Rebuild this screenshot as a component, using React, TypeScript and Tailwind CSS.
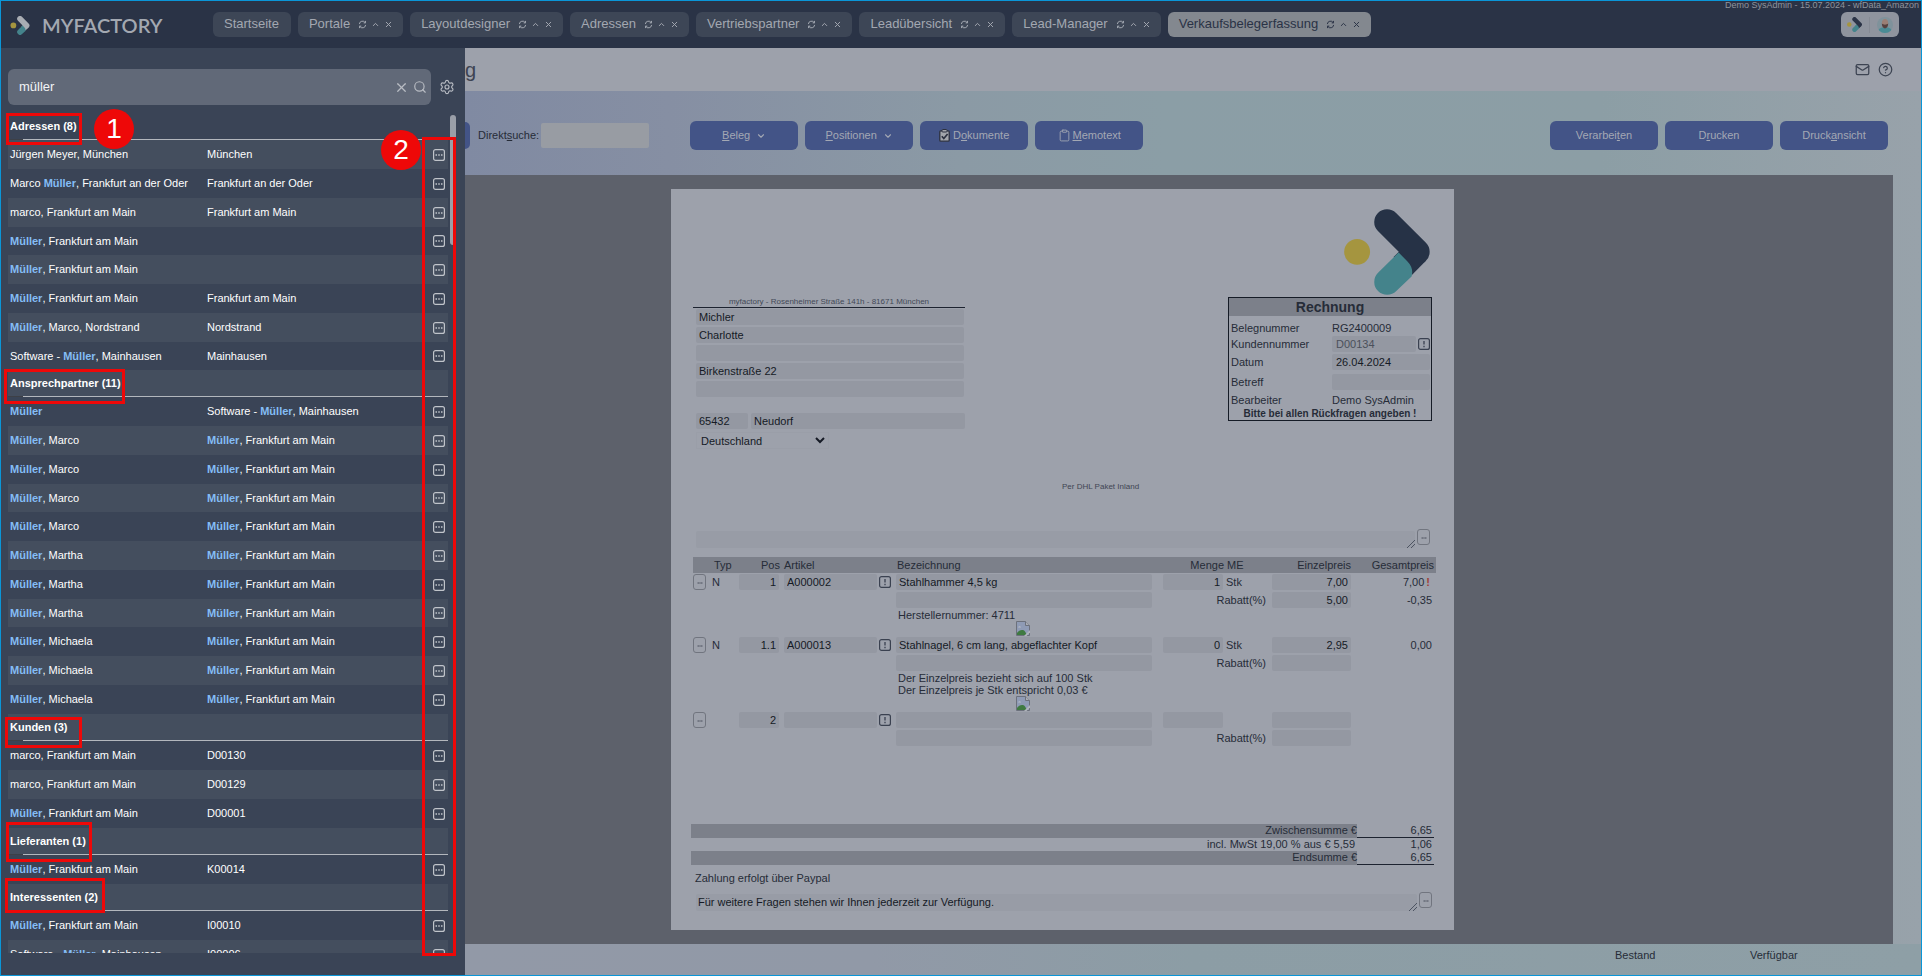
import type { ReactNode } from 'react'
import { ChevronDown, ChevronUp, CircleHelp, Clipboard, Mail, Search, Settings, X } from 'lucide-react'
import clsx from 'clsx'

const tabs = [
  'Portale',
  'Layoutdesigner',
  'Adressen',
  'Vertriebspartner',
  'Leadübersicht',
  'Lead-Manager',
  'Verkaufsbelegerfassung',
]

interface Group {
  title: string
  rows: [string, string][]
}

const groups: Group[] = [
  {
    title: 'Adressen (8)',
    rows: [
      ['Jürgen Meyer, München', 'München'],
      ['Marco Müller, Frankfurt an der Oder', 'Frankfurt an der Oder'],
      ['marco, Frankfurt am Main', 'Frankfurt am Main'],
      ['Müller, Frankfurt am Main', ''],
      ['Müller, Frankfurt am Main', ''],
      ['Müller, Frankfurt am Main', 'Frankfurt am Main'],
      ['Müller, Marco, Nordstrand', 'Nordstrand'],
      ['Software - Müller, Mainhausen', 'Mainhausen'],
    ],
  },
  {
    title: 'Ansprechpartner (11)',
    rows: [
      ['Müller', 'Software - Müller, Mainhausen'],
      ['Müller, Marco', 'Müller, Frankfurt am Main'],
      ['Müller, Marco', 'Müller, Frankfurt am Main'],
      ['Müller, Marco', 'Müller, Frankfurt am Main'],
      ['Müller, Marco', 'Müller, Frankfurt am Main'],
      ['Müller, Martha', 'Müller, Frankfurt am Main'],
      ['Müller, Martha', 'Müller, Frankfurt am Main'],
      ['Müller, Martha', 'Müller, Frankfurt am Main'],
      ['Müller, Michaela', 'Müller, Frankfurt am Main'],
      ['Müller, Michaela', 'Müller, Frankfurt am Main'],
      ['Müller, Michaela', 'Müller, Frankfurt am Main'],
    ],
  },
  {
    title: 'Kunden (3)',
    rows: [
      ['marco, Frankfurt am Main', 'D00130'],
      ['marco, Frankfurt am Main', 'D00129'],
      ['Müller, Frankfurt am Main', 'D00001'],
    ],
  },
  {
    title: 'Lieferanten (1)',
    rows: [['Müller, Frankfurt am Main', 'K00014']],
  },
  {
    title: 'Interessenten (2)',
    rows: [
      ['Müller, Frankfurt am Main', 'I00010'],
      ['Software - Müller, Mainhausen', 'I00006'],
    ],
  },
]

interface Position {
  typ: string
  pos: string
  artikel: string
  name: string
  menge: string
  me: string
  preis: string
  gesamt: string
  warn?: boolean
  rabatt: string
  rabattSumme: string
  notes: string[]
}

const positions: Position[] = [
  {
    typ: 'N',
    pos: '1',
    artikel: 'A000002',
    name: 'Stahlhammer 4,5 kg',
    menge: '1',
    me: 'Stk',
    preis: '7,00',
    gesamt: '7,00',
    warn: true,
    rabatt: '5,00',
    rabattSumme: '-0,35',
    notes: ['Herstellernummer: 4711'],
  },
  {
    typ: 'N',
    pos: '1.1',
    artikel: 'A000013',
    name: 'Stahlnagel, 6 cm lang, abgeflachter Kopf',
    menge: '0',
    me: 'Stk',
    preis: '2,95',
    gesamt: '0,00',
    rabatt: '',
    rabattSumme: '',
    notes: ['Der Einzelpreis bezieht sich auf 100 Stk', 'Der Einzelpreis je Stk entspricht 0,03 €'],
  },
  {
    typ: '',
    pos: '2',
    artikel: '',
    name: '',
    menge: '',
    me: '',
    preis: '',
    gesamt: '',
    rabatt: '',
    rabattSumme: '',
    notes: [],
  },
]

function Logo({ className, arm }: { className: string; arm: string }) {
  return (
    <svg viewBox="0 0 258 259" className={className} aria-hidden="true">
      <circle cx="39" cy="129" r="39" fill="#a5953f" />
      <path
        d="M129 39 L219 129"
        stroke={arm}
        strokeWidth="77"
        strokeLinecap="round"
        fill="none"
      />
      <path d="M219 129 L176 172" stroke={arm} strokeWidth="77" fill="none" />
      <path
        d="M102 192 L164 131 L190 157 C206 173 207 190 203 203 L157 247 A38.5 38.5 0 0 1 102 192 Z"
        fill="#44838b"
      />
    </svg>
  )
}

function Highlight({ text }: { text: string }) {
  return (
    <>
      {text.split(/(Müller)/).map((part, i) =>
        part === 'Müller' ? (
          <b key={i} className="text-[#84bdf5]">
            {part}
          </b>
        ) : (
          part
        ),
      )}
    </>
  )
}

function MoreIcon() {
  return (
    <svg viewBox="0 0 12 12" className="size-3" fill="none" aria-hidden="true">
      <rect x="0.6" y="0.6" width="10.8" height="10.8" rx="2" stroke="#c0c4ca" strokeWidth="1.2" />
      <path d="M2.500 6h1.500M5.250 6h1.500M8 6h1.500" stroke="#c0c4ca" strokeWidth="1.500" />
    </svg>
  )
}

function ReloadIcon() {
  return (
    <svg viewBox="0 0 10 10" className="size-[9px]" fill="none" stroke="currentColor" strokeWidth="1.1" aria-hidden="true">
      <path d="M1.500 4.500A3.500 3.500 0 0 1 8 3M8.500 5.500A3.500 3.500 0 0 1 2 7" />
      <path d="M8.300 1v2.200H6.300M1.700 9V6.800h2" />
    </svg>
  )
}

function InfoButton({ label }: { label: string }) {
  return (
    <button type="button" aria-label={label} className="block size-3">
      <svg viewBox="0 0 12 12" className="size-3" fill="none" aria-hidden="true">
        <rect x="0.6" y="0.6" width="10.8" height="10.8" rx="2" stroke="#3a4150" strokeWidth="1.2" />
        <path d="M6 3v3.4M6 7.8v1.4" stroke="#3a4150" strokeWidth="1.3" />
      </svg>
    </button>
  )
}

function DotsButton({ label }: { label: string }) {
  return (
    <button
      type="button"
      aria-label={label}
      className="flex h-4 w-[13px] shrink-0 items-center justify-center rounded-[3px] border border-[#71757f] pt-0.5"
    >
      <svg viewBox="0 0 6 2" className="h-0.5 w-1.5" aria-hidden="true">
        <path d="M0.500 1h2.200M3.300 1h2.200" stroke="#4a4f5c" strokeWidth="1" />
      </svg>
    </button>
  )
}

function BrokenImage() {
  return (
    <svg viewBox="0 0 14 15" className="h-[15px] w-3.5" role="img" aria-label="Artikelbild">
      <path d="M0.5 0.5h9l4 4v10h-13z" fill="#8f9bb5" stroke="#6c717c" />
      <path d="M9.5 0.5v4h4" fill="#a9adb5" stroke="#6c717c" />
      <path d="M2 6.5c.6-1.6 2.6-1.4 3 0z" fill="#b9bdc6" />
      <path d="M1 14v-2c2-3 6-4 8-1.500l2 3.500z" fill="#3f7a41" />
      <path d="M8 15l6-6v2.500l-3.500 3.500z" fill="#b0b4bc" />
    </svg>
  )
}

function Field({ label, value = '', className }: { label: string; value?: string; className?: string }) {
  return (
    <input
      type="text"
      aria-label={label}
      defaultValue={value}
      className={clsx('block h-4 min-w-0 rounded-xs bg-[#9498a2] px-[3px] text-[11px] text-[#151a25]', className)}
    />
  )
}

function ActionButton({ children }: { children: ReactNode }) {
  return (
    <button
      type="button"
      className="flex h-[29px] w-[108px] items-center justify-center rounded-md bg-[#435487] text-[11px] text-[#a3a8b4]"
    >
      {children}
    </button>
  )
}

function TopBar() {
  return (
    <header className="relative flex h-[47px] shrink-0 items-start bg-[#2a3346] pt-[11px] pr-[22px] pl-[9px]">
      <div className="flex w-[203px] items-center gap-3 pt-px">
        <Logo className="h-[19px] w-5" arm="#a9adb3" />
        <span className="font-[Lato] text-[20px] leading-6 font-semibold text-[#a3a8b1]">MYFACTORY</span>
      </div>
      <nav className="flex gap-[7px] text-[13px] text-[#a3a8b1]">
        <a href="#startseite" className="flex h-[25px] items-center rounded-md bg-[#3d4656] pr-3 pb-px pl-[11px]">
          Startseite
        </a>
        {tabs.map((tab, i) => (
          <div
            key={tab}
            className={clsx(
              'flex h-[25px] items-center rounded-md pr-[10px] pb-px pl-[11px]',
              i === tabs.length - 1 ? 'bg-[#83888f] text-[#2a3346]' : 'bg-[#3d4656]',
            )}
          >
            <a href={`#${tab}`}>{tab}</a>
            <span className="ml-2 flex items-center gap-1">
              <button type="button" aria-label={`${tab} neu laden`}>
                <ReloadIcon />
              </button>
              <button type="button" aria-label={`${tab} lösen`}>
                <ChevronUp className="size-[9px]" strokeWidth={2.6} />
              </button>
              <button type="button" aria-label={`${tab} schließen`}>
                <X className="size-[9px]" strokeWidth={2.6} />
              </button>
            </span>
          </div>
        ))}
      </nav>
      <div className="ml-auto flex h-[25px] w-[58px] items-center justify-between rounded-md bg-[#8f949e] px-[6px]">
        <Logo className="size-[15px]" arm="#2a3346" />
        <span className="h-4 w-px bg-[#858a94]" />
        <svg viewBox="0 0 16 16" className="size-4" aria-label="Benutzer" role="img">
          <defs>
            <clipPath id="avatar">
              <circle cx="8" cy="8" r="8" />
            </clipPath>
          </defs>
          <g clipPath="url(#avatar)">
            <rect width="16" height="16" fill="#7f929b" />
            <ellipse cx="8" cy="16" rx="8" ry="6" fill="#4a8b95" />
            <ellipse cx="8" cy="6.500" rx="3.200" ry="4.500" fill="#9b7f75" />
            <path d="M4.800 6.500c.4 6.500 6 6.500 6.400 0-1.500 1.500-4.900 1.500-6.400 0z" fill="#55413f" />
          </g>
        </svg>
      </div>
      <p className="absolute top-[-2px] right-0.5 text-[9px] leading-3 text-[#8f949d]">
        Demo SysAdmin - 15.07.2024 - wfData_Amazon
      </p>
    </header>
  )
}

function SearchPanel() {
  let line = 0
  return (
    <aside className="flex w-[464px] shrink-0 flex-col bg-[#3a4456] pt-[21px] pb-[22px] pl-[7px]">
      <div className="flex items-center">
        <div className="flex h-9 w-[423px] items-center rounded-md bg-[#616978] pr-1 text-[#b8bcc3]">
          <input
            type="text"
            aria-label="Suche"
            defaultValue="müller"
            className="min-w-0 flex-1 pl-[11px] text-[13px] text-[#f2f3f5]"
          />
          <button type="button" aria-label="Suche leeren" className="mr-1">
            <X className="size-[15px]" />
          </button>
          <button type="button" aria-label="Suchen">
            <Search className="size-[14px]" />
          </button>
        </div>
        <button type="button" aria-label="Einstellungen" className="ml-2 text-[#b8bcc3]">
          <Settings className="size-4" strokeWidth={1.7} />
        </button>
      </div>
      <div className="mt-2 flex min-h-0 flex-1 overflow-hidden">
        <table className="h-max w-[440px] table-fixed border-collapse text-[11px] text-white">
          <colgroup>
            <col className="w-[197px]" />
            <col />
            <col className="w-[24px]" />
          </colgroup>
          {groups.map((group) => (
            <tbody key={group.title}>
              <tr className={clsx(line++ % 2 ? 'bg-[#444e5e]' : 'bg-[#3a4456]')}>
                <th colSpan={3} className="p-0 text-left">
                  <div className="h-[26px] pl-0.5 leading-[26px]">{group.title}</div>
                  <div className="h-px border-l-[15px] border-[#3d4047] bg-[#b3b7bd]" />
                </th>
              </tr>
              {group.rows.map(([name, detail], i) => (
                <tr
                  key={i}
                  className={clsx(line++ % 2 ? 'bg-[#444e5e]' : 'bg-[#3a4456]', i % 4 === 3 ? 'h-[28px]' : 'h-[29px]')}
                >
                  <td className="py-0 pl-0.5">
                    <Highlight text={name} />
                  </td>
                  <td className="py-0 pl-0.5">
                    <Highlight text={detail} />
                  </td>
                  <td className="py-0 pl-[9px]">
                    <button type="button" aria-label={`Aktionen ${name}`} className="block">
                      <MoreIcon />
                    </button>
                  </td>
                </tr>
              ))}
            </tbody>
          ))}
        </table>
        <div className="mt-0.5 ml-0.5 h-[130px] w-1.5 rounded-full bg-[#9a9fa8]" />
      </div>
    </aside>
  )
}

function AddressBlock() {
  return (
    <div className="w-[272px] pt-[87px]">
      <p className="border-b border-[#1d2330] text-center text-[8px] leading-[11px] text-[#434957]">
        myfactory - Rosenheimer Straße 141h - 81671 München
      </p>
      <div className="mt-px mr-px ml-[3px] flex flex-col gap-0.5">
        <Field label="Name" value="Michler" />
        <Field label="Vorname" value="Charlotte" />
        <Field label="Zusatz" />
        <Field label="Straße" value="Birkenstraße 22" />
        <Field label="Zusatz 2" />
      </div>
      <div className="mt-4 ml-[3px] flex gap-[3px]">
        <Field label="PLZ" value="65432" className="w-[52px]" />
        <Field label="Ort" value="Neudorf" className="flex-1" />
      </div>
      <div className="mt-[3px] ml-[3px] flex h-[17px] w-[133px] items-center border border-[#9a9ea8]">
        <select aria-label="Land" defaultValue="Deutschland" className="h-full w-full text-[11px] text-[#151a25]">
          <option>Deutschland</option>
        </select>
      </div>
    </div>
  )
}

function InvoiceBox() {
  return (
    <div className="mr-1 flex w-[204px] flex-col">
      <Logo className="mr-0.5 size-[86px] self-end" arm="#263246" />
      <section className="mt-0.5 border border-[#151b26] text-[11px] text-[#262c38]">
        <h2 className="mb-1 bg-[#7c808a] text-center text-sm leading-[18px] font-bold">Rechnung</h2>
        <div className="grid grid-cols-[101px_1fr] items-center pl-0.5 leading-4">
          <span>Belegnummer</span>
          <span>RG2400009</span>
          <label htmlFor="kundennummer">Kundennummer</label>
          <span className="flex items-center justify-between pr-px">
            <input
              id="kundennummer"
              type="text"
              defaultValue="D00134"
              className="h-4 w-[84px] rounded-xs bg-[#9498a2] px-1 text-[#4b505b]"
            />
            <InfoButton label="Kunde anzeigen" />
          </span>
          <label htmlFor="datum" className="leading-5">
            Datum
          </label>
          <input
            id="datum"
            type="text"
            defaultValue="26.04.2024"
            className="mr-px h-4 min-w-0 rounded-xs bg-[#9498a2] px-1 text-[#151a25]"
          />
          <label htmlFor="betreff" className="leading-5">
            Betreff
          </label>
          <input id="betreff" type="text" className="mr-px h-4 min-w-0 rounded-xs bg-[#9498a2] px-1" />
          <span>Bearbeiter</span>
          <span>Demo SysAdmin</span>
        </div>
        <p className="text-center text-[10px] leading-3 font-bold">Bitte bei allen Rückfragen angeben !</p>
      </section>
    </div>
  )
}

function PositionRows({ item }: { item: Position }) {
  return (
    <tbody>
      <tr className="h-[18px]">
        <td className="p-0">
          <DotsButton label={`Position ${item.pos} bearbeiten`} />
        </td>
        <td className="py-0 pl-0.5">{item.typ}</td>
        <td className="p-0">
          <Field label="Pos" value={item.pos} className="w-10 text-right" />
        </td>
        <td className="py-0 pl-0.5">
          <Field label="Artikel" value={item.artikel} className="w-[93px]" />
        </td>
        <td className="py-0 pl-px">
          <InfoButton label="Artikel anzeigen" />
        </td>
        <td className="py-0 pr-2">
          <Field label="Bezeichnung" value={item.name} className="w-full" />
        </td>
        <td className="py-0 pr-0.5 pl-[3px]">
          <Field label="Menge" value={item.menge} className="w-full text-right" />
        </td>
        <td className="py-0 pl-px">{item.me}</td>
        <td className="py-0 pr-0.5 pl-1">
          <Field label="Einzelpreis" value={item.preis} className="w-full text-right" />
        </td>
        <td className="py-0 pr-1 text-right">
          {item.gesamt}
          {item.warn && <b className="ml-0.5 pr-0.5 text-[#a04038]">!</b>}
        </td>
      </tr>
      <tr className="h-[18px]">
        <td colSpan={5} className="p-0" />
        <td className="py-0 pr-2">
          <Field label="Bezeichnung 2" className="w-full" />
        </td>
        <td colSpan={2} className="py-0 pr-0.5 text-right">
          Rabatt(%)
        </td>
        <td className="py-0 pr-0.5 pl-1">
          <Field label="Rabatt" value={item.rabatt} className="w-full text-right" />
        </td>
        <td className="py-0 pr-1 text-right">{item.rabattSumme}</td>
      </tr>
      {item.notes.length > 0 && (
        <tr>
          <td colSpan={5} className="p-0" />
          <td className="py-0 pr-3 pl-0.5 leading-3">
            {item.notes.map((note) => (
              <div key={note}>{note}</div>
            ))}
            <div className="flex justify-center">
              <BrokenImage />
            </div>
          </td>
          <td colSpan={4} className="p-0" />
        </tr>
      )}
    </tbody>
  )
}

function NoteArea({ label, value = '' }: { label: string; value?: string }) {
  return (
    <div className="ml-[3px] flex items-start gap-0.5">
      <div className="relative mt-0.5 min-w-0 flex-1">
        <textarea
          aria-label={label}
          defaultValue={value}
          rows={1}
          className="block h-[17px] w-full resize-none overflow-hidden rounded-xs bg-[#989ca6] px-0.5 text-[11px] leading-4 text-[#151a25]"
        />
        <svg viewBox="0 0 8 8" className="absolute right-0 bottom-0 size-2" aria-hidden="true">
          <path d="M0 8L8 0M4 8L8 4" stroke="#3a4150" strokeWidth="0.8" />
        </svg>
      </div>
      <DotsButton label={`${label} bearbeiten`} />
    </div>
  )
}

function InvoicePage() {
  return (
    <article className="w-[783px] shrink-0 bg-[#9da1ab] pt-5 pr-[18px] pb-5 pl-[22px] text-[11px] text-[#262c38]">
      <div className="flex items-start justify-between">
        <AddressBlock />
        <InvoiceBox />
      </div>
      <p className="mt-8 ml-[369px] text-[8px] leading-3 text-[#3f4553]">Per DHL Paket Inland</p>
      <div className="mt-9 mr-[6px]">
        <NoteArea label="Kopftext" />
      </div>
      <table className="mt-[9px] w-full table-fixed border-collapse leading-4">
        <colgroup>
          <col className="w-[17px]" />
          <col className="w-[29px]" />
          <col className="w-[43px]" />
          <col className="w-[96px]" />
          <col className="w-[18px]" />
          <col />
          <col className="w-[65px]" />
          <col className="w-[43px]" />
          <col className="w-[85px]" />
          <col className="w-[83px]" />
        </colgroup>
        <thead className="bg-[#7c808a] text-left">
          <tr>
            <th className="p-0" />
            <th className="py-0 pl-1 font-normal">Typ</th>
            <th className="py-0 pr-0.5 text-right font-normal">Pos</th>
            <th className="py-0 pl-0.5 font-normal">Artikel</th>
            <th className="p-0" />
            <th className="py-0 pl-px font-normal">Bezeichnung</th>
            <th className="py-0 pr-px text-right font-normal">Menge</th>
            <th className="py-0 pl-0.5 font-normal">ME</th>
            <th className="py-0 pr-0.5 text-right font-normal">Einzelpreis</th>
            <th className="py-0 pr-0.5 text-right font-normal">Gesamtpreis</th>
          </tr>
        </thead>
        {positions.map((item) => (
          <PositionRows key={item.pos} item={item} />
        ))}
      </table>
      <table className="mt-[77px] -ml-0.5 w-[743px] table-fixed border-collapse text-right leading-[13px]">
        <colgroup>
          <col />
          <col className="w-[77px]" />
        </colgroup>
        <tbody>
          <tr>
            <td className="bg-[#7c808a] p-0">Zwischensumme €</td>
            <td className="border-b border-[#1d2330] py-0 pr-0.5">6,65</td>
          </tr>
          <tr>
            <td className="py-0 pr-0.5">incl. MwSt 19,00 % aus € 5,59</td>
            <td className="py-0 pr-0.5">1,06</td>
          </tr>
          <tr>
            <td className="bg-[#7c808a] p-0">Endsumme €</td>
            <td className="border-b border-[#1d2330] py-0 pr-0.5">6,65</td>
          </tr>
        </tbody>
      </table>
      <p className="mt-[7px] pl-0.5 leading-[13px]">Zahlung erfolgt über Paypal</p>
      <div className="mt-[7px] mr-1">
        <NoteArea label="Fußtext" value="Für weitere Fragen stehen wir Ihnen jederzeit zur Verfügung." />
      </div>
    </article>
  )
}

function Workspace() {
  return (
    <main className="flex min-w-0 flex-1 flex-col bg-[linear-gradient(90deg,#808aa2_0%,#868fa3_14%,#8b9aa5_34%,#8b9ea6_48%,#8c9ea5_78%,#98a2aa_100%)]">
      <div className="flex h-[43px] shrink-0 items-center justify-between bg-[#9da1ab] pr-7 text-[#3d4452]">
        <h1 className="text-xl leading-6">g</h1>
        <div className="flex items-center gap-2">
          <button type="button" aria-label="Nachricht">
            <Mail className="size-[15px]" />
          </button>
          <button type="button" aria-label="Hilfe">
            <CircleHelp className="size-[15px]" />
          </button>
        </div>
      </div>
      <div className="flex h-[84px] shrink-0 items-center pt-[5px] pr-[33px]">
        <div className="h-[27px] w-[5px] rounded-r-md bg-[#435487]" />
        <label htmlFor="direktsuche" className="ml-2 text-[11px] text-[#262c38]">
          Direkt<u>s</u>uche:
        </label>
        <input id="direktsuche" type="text" className="ml-0.5 h-[25px] w-[108px] rounded-xs bg-[#989ca3] px-1 text-[11px]" />
        <div className="ml-[41px] flex gap-[7px]">
          <ActionButton>
            <span>
              <u>B</u>eleg
            </span>
            <ChevronDown className="ml-1.5 size-[10px]" strokeWidth={2.6} />
          </ActionButton>
          <ActionButton>
            <span>
              <u>P</u>ositionen
            </span>
            <ChevronDown className="ml-1.5 size-[10px]" strokeWidth={2.6} />
          </ActionButton>
          <ActionButton>
            <svg viewBox="0 0 11 13" className="mr-[3px] h-[13px] w-[11px]" fill="none" aria-hidden="true">
              <rect x="0.800" y="1.800" width="9.400" height="10.400" rx="1" fill="#a3a6ac" stroke="#2c3140" strokeWidth="1.300" />
              <rect x="3" y="0.500" width="5" height="2.500" rx="0.800" fill="#a3a6ac" stroke="#2c3140" />
              <path d="M2.800 7.200l2 2.300 3.800-4.500" stroke="#2c3140" strokeWidth="1.700" />
            </svg>
            <span>
              D<u>o</u>kumente
            </span>
          </ActionButton>
          <ActionButton>
            <Clipboard className="mr-0.5 size-[13px]" strokeWidth={1.6} />
            <span>
              <u>M</u>emotext
            </span>
          </ActionButton>
        </div>
        <div className="ml-auto flex gap-[7px]">
          <ActionButton>
            <span>
              Verarbei<u>t</u>en
            </span>
          </ActionButton>
          <ActionButton>
            <span>
              D<u>r</u>ucken
            </span>
          </ActionButton>
          <ActionButton>
            <span>
              Druck<u>a</u>nsicht
            </span>
          </ActionButton>
        </div>
      </div>
      <div className="mr-7 flex min-h-0 flex-1 items-stretch bg-[#5d616b] py-[14px] pl-[206px]">
        <InvoicePage />
      </div>
      <footer className="flex h-[31px] shrink-0 justify-end bg-[linear-gradient(90deg,#9299a7_0%,#9199a7_28%,#8c9da5_50%,#8e9fa6_100%)] pt-1 pr-[123px] text-[11px] leading-[14px] text-[#262c38]">
        <span className="w-[135px]">Bestand</span>
        <span className="w-12">Verfügbar</span>
      </footer>
    </main>
  )
}

// red frames that point out the groups and the action column
function Annotations() {
  return (
    <div className="pointer-events-none">
      <div className="absolute top-[113px] left-[6px] h-[32px] w-[76px] border-3 border-[#ee0808]" />
      <div className="absolute top-[369px] left-[4px] h-[35px] w-[121px] border-3 border-[#ee0808]" />
      <div className="absolute top-[717px] left-[5px] h-[31px] w-[77px] border-3 border-[#ee0808]" />
      <div className="absolute top-[822px] left-[6px] h-[40px] w-[86px] border-3 border-[#ee0808]" />
      <div className="absolute top-[878px] left-[5px] h-[35px] w-[100px] border-3 border-[#ee0808]" />
      <div className="absolute top-[137px] left-[422px] h-[819px] w-[34px] border-3 border-[#ee0808]" />
      <div className="absolute top-[109px] left-[94px] flex size-10 items-center justify-center rounded-full bg-[#ee0808] text-[28px] text-white">
        1
      </div>
      <div className="absolute top-[130px] left-[381px] flex size-10 items-center justify-center rounded-full bg-[#ee0808] text-[28px] text-white">
        2
      </div>
    </div>
  )
}

export default function App() {
  return (
    <div className="relative h-screen overflow-hidden font-['Liberation_Sans',Arial,sans-serif]">
      <div className="flex h-full flex-col border border-[#0a96d8]">
        <TopBar />
        <div className="flex min-h-0 flex-1">
          <SearchPanel />
          <Workspace />
        </div>
      </div>
      <Annotations />
    </div>
  )
}
